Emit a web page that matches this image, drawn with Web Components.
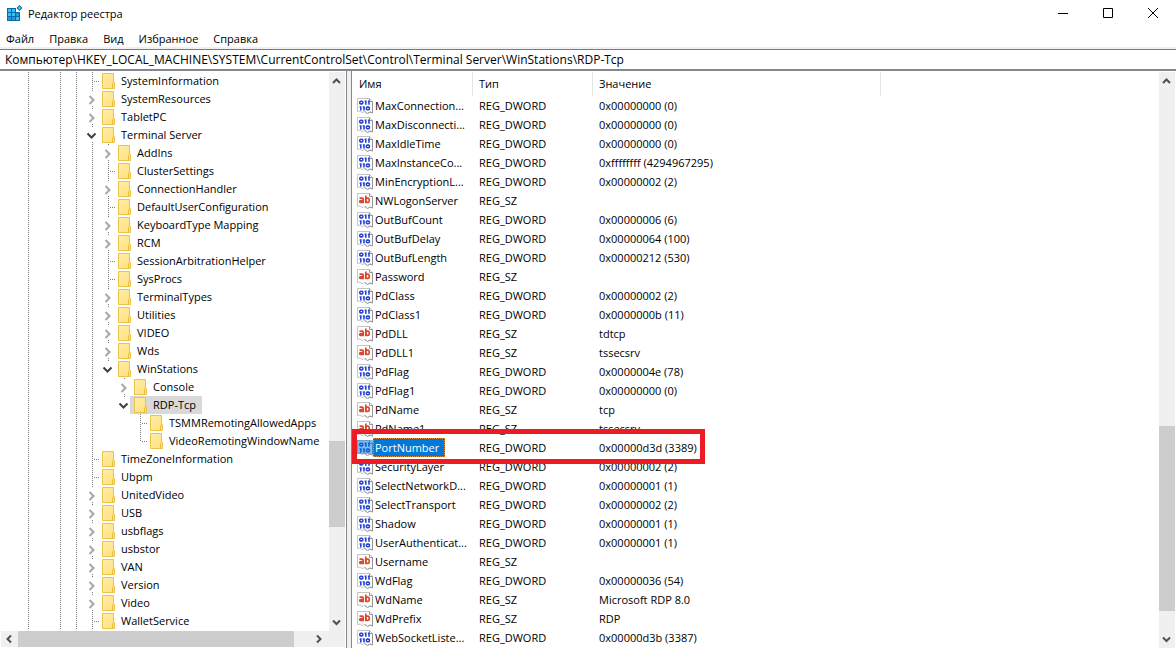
<!DOCTYPE html>
<html lang="ru">
<head>
<meta charset="utf-8">
<meta name="viewport" content="width=device-width, initial-scale=1">
<title>Редактор реестра</title>
<style>
  html, body { margin: 0; height: 100%; background: #fff; }
  body { font: 11px/18px "Open Sans", "Noto Sans", sans-serif; color: #000; overflow: hidden; }
</style>
</head>
<body>
<registry-editor></registry-editor>

<script>
class BaseElement extends HTMLElement {
  constructor() { super(); this.attachShadow({ mode: 'open' }); }
  connectedCallback() { this.shadowRoot.innerHTML = this.render(); }
}

/* Logo: a block of cyan cubes with one detached cube */
customElements.define('regedit-logo', class extends BaseElement {
  render() {
    return `<style>:host{display:block;width:18px;height:18px}svg{display:block}</style>
    <svg width="18" height="18" viewBox="0 0 18 18" aria-hidden="true">
      <rect x="1" y="3" width="13" height="13" fill="#0b6aa8"/>
      <g fill="#35c1f1"><rect x="2" y="4" width="3" height="3"/><rect x="6" y="4" width="3" height="3"/><rect x="2" y="8" width="3" height="3"/><rect x="6" y="8" width="3" height="3"/><rect x="10" y="12" width="3" height="3"/></g>
      <g fill="#1a9bdc"><rect x="2" y="12" width="3" height="3"/><rect x="6" y="12" width="3" height="3"/></g>
      <path d="M10 2H15V7H10Z" fill="#fff"/><rect x="10" y="8" width="3" height="3" fill="#1a9bdc"/>
      <path d="M13.5 0L16.5 3L13.5 6L10.5 3Z" fill="#0b6aa8"/><path d="M13.5 1.4L15.1 3L13.5 4.6L11.9 3Z" fill="#5fd0f5"/>
    </svg>`;
  }
});

customElements.define('folder-icon', class extends BaseElement {
  render() {
    return `<style>:host{display:block;width:14px;height:18px;flex:none}svg{display:block}</style>
    <svg width="14" height="18" viewBox="0 0 14 18" aria-hidden="true">
      <defs><linearGradient id="g" x1="0" y1="0" x2="1" y2="1"><stop offset="0" stop-color="#ffeeaa"/><stop offset="1" stop-color="#ffe07c"/></linearGradient></defs>
      <path d="M.5 1.5H11.5V10.5H12.5V16.5H.5Z" fill="url(#g)" stroke="#ecc347"/>
      <path d="M10.5 16V11.5L11.5 10.5" fill="none" stroke="#e8bc3c"/>
    </svg>`;
  }
});

/* Page with a torn lower edge; type is "dword" or "sz" */
customElements.define('value-icon', class extends BaseElement {
  render() {
    const art = this.getAttribute('type') === 'dword'
      ? `<g fill="none" stroke="#2444d4" stroke-width="1.6">
           <rect x="2.8" y="3.3" width="3" height="2.6" rx="1"/><path d="M8.8 2.5V6.7M12 2.5V6.7M7.6 3.2H8.8M10.9 3.2H12"/>
           <path d="M3.8 8.3V12.5M7 8.3V12.5M2.6 9H3.8M5.8 9H7"/><rect x="9.4" y="9.1" width="3" height="2.6" rx="1"/></g>`
      : `<g fill="none" stroke="#d9482b" stroke-width="1.7">
           <path d="M2.5 5.2H5.2Q6.2 5.2 6.2 6.2V10.2M6.2 7.6H4Q2.7 7.6 2.7 8.6T4 9.4H6.2"/>
           <path d="M8.8 2.5V10.2"/><rect x="8.8" y="5.2" width="3.4" height="4.2" rx="1.5"/></g>`;
    return `<style>:host{display:block;width:16px;height:16px;flex:none}svg{display:block}</style>
    <svg width="16" height="16" viewBox="0 0 16 16" aria-hidden="true">
      <path d="M.5 .5H12.5L15.5 3.5V15L13 14L10.5 15.5L8 13.5L5 14.5L3 13L.5 13.5Z" fill="#fff" stroke="#c4c4c4"/>
      <path d="M12.5 .5V3.5H15.5V15L13 14L10.5 15.5L8 13.5" fill="none" stroke="#969696"/>${art}
    </svg>`;
  }
});

customElements.define('scroll-bar', class extends BaseElement {
  render() {
    const h = this.getAttribute('orientation') === 'horizontal';
    const [before, size, after] = this.getAttribute('track').split(' ');
    const arrow = d => `<svg width="16" height="16" viewBox="0 0 16 16" aria-hidden="true"><path d="${d}" fill="none" stroke="#505050" stroke-width="2"/></svg>`;
    const dirs = h ? ['M10 4.5L6.5 8L10 11.5', 'M6 4.5L9.5 8L6 11.5'] : ['M4 11L7.5 7.5L11 11', 'M4 5.5L7.5 9L11 5.5'];
    return `<style>
      :host{display:flex;flex-direction:${h ? 'row' : 'column'};background:#f0f0f0;min-width:0;min-height:0}
      button{display:block;flex:none;border:0;padding:0;margin:0;width:16px;height:16px;background:none}
      svg{display:block}
      .track{flex:1;display:flex;flex-direction:inherit;min-height:0}
      .thumb{background:#cdcdcd;flex:${size} 0 0}
    </style>
    <button type="button" aria-label="Назад">${arrow(dirs[0])}</button>
    <div class="track"><div style="flex:${before} 0 0"></div><div class="thumb"></div><div style="flex:${after} 0 0"></div></div>
    <button type="button" aria-label="Вперёд">${arrow(dirs[1])}</button>`;
  }
});

customElements.define('title-bar', class extends BaseElement {
  render() {
    return `<style>
      :host{display:flex;align-items:center;height:28px;padding-left:6px;gap:4px}
      h1{flex:1;margin:0;font:inherit}
      button{width:45px;height:28px;padding:0 0 2px;border:0;background:none;display:grid;place-items:center}
      .buttons{display:flex}
    </style>
    <regedit-logo></regedit-logo><h1><slot></slot></h1>
    <div class="buttons">
      <button type="button" aria-label="Свернуть"><svg width="11" height="10"><path d="M0 5.5H10" stroke="#000"/></svg></button>
      <button type="button" aria-label="Развернуть"><svg width="11" height="10"><path d="M.5 .5H9.5V9.5H.5Z" stroke="#000" fill="none"/></svg></button>
      <button type="button" aria-label="Закрыть"><svg width="11" height="10"><path d="M0 0L10 10M10 0L0 10" stroke="#000" fill="none"/></svg></button>
    </div>`;
  }
});

customElements.define('menu-bar', class extends BaseElement {
  render() {
    return `<style>
      :host{display:flex;gap:15px;padding:2px 6px 0;border-bottom:2px solid #f0f0f0;box-sizing:border-box;height:21px}
      button{font:inherit;line-height:18px;color:inherit;border:0;padding:0;background:none}
    </style>` + ['Файл', 'Правка', 'Вид', 'Избранное', 'Справка'].map(t => `<button type="button">${t}</button>`).join('');
  }
});

customElements.define('address-bar', class extends BaseElement {
  render() {
    return `<style>
      :host{display:block;border-top:1px solid #7a7a7a;border-bottom:2px solid #828790}
      input{display:block;box-sizing:border-box;width:100%;height:19px;border:0;padding:0 5px;font:inherit;font-size:12px;color:inherit;background:#fff;outline:0}
    </style><input aria-label="Путь" value="${this.getAttribute('path')}">`;
  }
});

/* [level, state, name]; state: "-" leaf, ">" collapsed, "v" expanded */
const KEYS = [
  [0,'-','SystemInformation'],[0,'>','SystemResources'],[0,'>','TabletPC'],[0,'v','Terminal Server'],
  [1,'>','AddIns'],[1,'-','ClusterSettings'],[1,'>','ConnectionHandler'],[1,'-','DefaultUserConfiguration'],
  [1,'>','KeyboardType Mapping'],[1,'>','RCM'],[1,'-','SessionArbitrationHelper'],[1,'-','SysProcs'],
  [1,'>','TerminalTypes'],[1,'>','Utilities'],[1,'>','VIDEO'],[1,'>','Wds'],[1,'v','WinStations'],
  [2,'>','Console'],[2,'v','RDP-Tcp'],[3,'-','TSMMRemotingAllowedApps'],[3,'-','VideoRemotingWindowName'],
  [0,'-','TimeZoneInformation'],[0,'-','Ubpm'],[0,'>','UnitedVideo'],[0,'>','USB'],[0,'>','usbflags'],
  [0,'>','usbstor'],[0,'>','VAN'],[0,'>','Version'],[0,'>','Video'],[0,'-','WalletService']
];

customElements.define('key-tree', class extends BaseElement {
  render() {
    const svg = body => `<svg width="16" height="18" viewBox="0 0 16 18" aria-hidden="true">${body}</svg>`;
    const dots = d => `<path d="${d}" stroke="#7d7d7d" stroke-dasharray="1 1" fill="none"/>`;
    const line = svg(dots('M8.5 0V18')), blank = svg('');
    const rows = KEYS.map(([level, state, name], i) => {
      const next = KEYS.slice(i + 1).find(k => k[0] <= level);
      const last = level > 0 && (!next || next[0] < level);
      let guides = line + blank + line + line;
      for (let l = 0; l < level; l++) guides += l === 0 ? line : blank;
      const joint = state === '-'
        ? svg(dots(last ? 'M8.5 0V10' : 'M8.5 0V18') + dots('M10 9.5H16'))
        : svg(dots(last ? 'M8.5 0V2' : 'M8.5 0V2M8.5 16V18') + (state === '>'
            ? '<path d="M5.5 6L9.5 10L5.5 14" fill="none" stroke="#a6a6a6" stroke-width="2"/>'
            : '<path d="M3.5 7.5L7.5 11.5L11.5 7.5" fill="none" stroke="#404040" stroke-width="2"/>'));
      const sel = name === 'RDP-Tcp';
      return `<li role="treeitem" aria-level="${level + 1}" aria-selected="${sel}"${state === '-' ? '' : ` aria-expanded="${state === 'v'}"`}>${guides}${joint}<span class="key"><folder-icon></folder-icon>${name}</span></li>`;
    }).join('');
    return `<style>
      :host{display:block;overflow:hidden;min-width:0;padding-top:1px}
      ul{list-style:none;margin:0;padding:0 0 0 20px}
      li{display:flex;height:18px;white-space:nowrap}
      svg{display:block;flex:none}
      .key{display:flex;gap:5px;padding:0 6px 0 4px;margin-left:-2px}
      [aria-selected=true] .key{background:#d9d9d9}
    </style><ul role="tree">${rows}</ul>`;
  }
});

const VALUES = `MaxConnection...|D|0x00000000 (0)
MaxDisconnecti...|D|0x00000000 (0)
MaxIdleTime|D|0x00000000 (0)
MaxInstanceCo...|D|0xffffffff (4294967295)
MinEncryptionL...|D|0x00000002 (2)
NWLogonServer|S|
OutBufCount|D|0x00000006 (6)
OutBufDelay|D|0x00000064 (100)
OutBufLength|D|0x00000212 (530)
Password|S|
PdClass|D|0x00000002 (2)
PdClass1|D|0x0000000b (11)
PdDLL|S|tdtcp
PdDLL1|S|tssecsrv
PdFlag|D|0x0000004e (78)
PdFlag1|D|0x00000000 (0)
PdName|S|tcp
PdName1|S|tssecsrv
PortNumber|D|0x00000d3d (3389)
SecurityLayer|D|0x00000002 (2)
SelectNetworkD...|D|0x00000001 (1)
SelectTransport|D|0x00000002 (2)
Shadow|D|0x00000001 (1)
UserAuthenticat...|D|0x00000001 (1)
Username|S|
WdFlag|D|0x00000036 (54)
WdName|S|Microsoft RDP 8.0
WdPrefix|S|RDP
WebSocketListe...|D|0x00000d3b (3387)`.split('\n').map(r => r.split('|'));

customElements.define('value-list', class extends BaseElement {
  render() {
    const rows = VALUES.map(([name, t, data]) => {
      const sel = name === 'PortNumber';
      return `<tr${sel ? ' class="selected"' : ''}><td><div class="name"><value-icon type="${t === 'D' ? 'dword' : 'sz'}"></value-icon><span>${name}</span>${sel ? '<i class="marker"></i>' : ''}</div></td><td>${t === 'D' ? 'REG_DWORD' : 'REG_SZ'}</td><td>${data}</td></tr>`;
    }).join('');
    return `<style>
      :host{display:block;overflow:hidden;min-width:0;padding-top:1px}
      table{border-collapse:separate;border-spacing:0;table-layout:fixed;width:529px}
      th,td{font-weight:400;text-align:left;padding:0 0 0 6px;white-space:nowrap}
      th{height:24px;border-right:1px solid #e5e5e5;box-sizing:border-box}
      th:first-child{padding-left:7px}
      td{height:19px;line-height:19px}
      td:first-child{padding-left:5px}
      .name{display:flex;align-items:center;height:19px;position:relative}
      .name span{padding:0 6px 0 2px}
      .selected .name span{background:#0078d7;color:#fff;outline:1px dotted #e08a3c;outline-offset:-1px}
      .selected .name::before{content:"";position:absolute;left:0;top:2px;width:16px;height:14px;background:#0078d7;opacity:.5;z-index:1}
      .marker{position:absolute;z-index:2;left:-5px;top:-9px;width:353px;height:35px;box-sizing:border-box;border:5px solid #ed1c24;pointer-events:none}
    </style>
    <table><colgroup><col style="width:121px"><col style="width:120px"><col></colgroup>
    <thead><tr><th scope="col">Имя</th><th scope="col">Тип</th><th scope="col">Значение</th></tr></thead><tbody>${rows}</tbody></table>`;
  }
});

customElements.define('registry-editor', class extends BaseElement {
  render() {
    return `<style>
      :host{display:flex;flex-direction:column;height:100vh;background:#fff}
      title-bar,menu-bar,address-bar{flex:none}
      main{flex:1;min-height:0;display:grid;grid-template-columns:347px minmax(0,1fr);column-gap:4px;background:#f0f0f0}
      .tree{display:grid;grid-template:minmax(0,1fr) 16px / minmax(0,1fr) 16px;border-right:1px solid #828790;padding:0 1px 1px 1px;min-height:0;background:#fff;box-sizing:border-box}
      .tree key-tree{margin-left:-1px}
      .tree .across{grid-column:1 / 3;padding-right:18px}
      .values{display:grid;grid-template:minmax(0,1fr) / minmax(0,1fr) 16px;border-left:1px solid #828790;padding-right:1px;min-height:0;background:#fff}
      scroll-bar.down{margin-top:1px}
    </style>
    <title-bar>Редактор реестра</title-bar>
    <menu-bar></menu-bar>
    <address-bar path="Компьютер\\HKEY_LOCAL_MACHINE\\SYSTEM\\CurrentControlSet\\Control\\Terminal Server\\WinStations\\RDP-Tcp"></address-bar>
    <main>
      <section class="tree" aria-label="Разделы">
        <key-tree></key-tree>
        <scroll-bar class="down" track="352 86 88"></scroll-bar>
        <scroll-bar class="across" orientation="horizontal" track="1 276 17"></scroll-bar>
      </section>
      <section class="values" aria-label="Параметры">
        <value-list></value-list>
        <scroll-bar class="down" track="337 184 21"></scroll-bar>
      </section>
    </main>`;
  }
});
</script>
</body>
</html>
